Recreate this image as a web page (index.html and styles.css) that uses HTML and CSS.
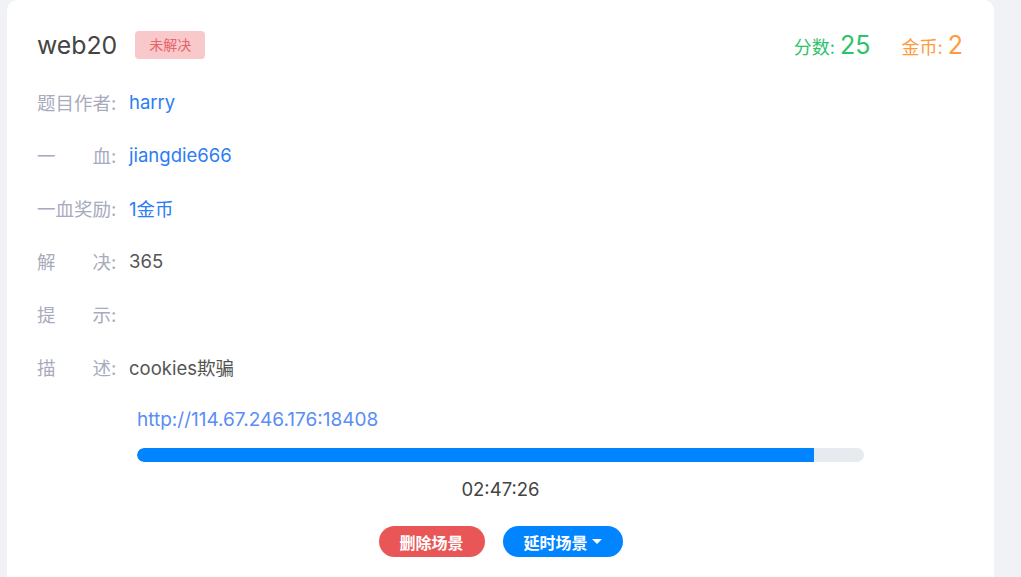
FILE: index.html
```html
<!DOCTYPE html>
<html lang="zh-CN">
<head>
<meta charset="utf-8">
<title>web20</title>
<link rel="stylesheet" href="styles.css">
</head>
<body>
<div class="page">
  <div class="card">
    <div class="header">
      <div class="title-wrap">
        <span class="title">web20</span>
        <span class="badge">未解决</span>
      </div>
      <div class="stats">
        <span class="score">分数: <b>25</b></span>
        <span class="coin">金币: <b>2</b></span>
      </div>
    </div>
    <div class="rows">
      <div class="row"><span class="label"><span class="lt">题目作者</span>:</span><span class="value link">harry</span></div>
      <div class="row"><span class="label"><span class="lt">一血</span>:</span><span class="value link">jiangdie666</span></div>
      <div class="row"><span class="label"><span class="lt">一血奖励</span>:</span><span class="value link">1金币</span></div>
      <div class="row"><span class="label"><span class="lt">解决</span>:</span><span class="value">365</span></div>
      <div class="row"><span class="label"><span class="lt">提示</span>:</span><span class="value"></span></div>
      <div class="row"><span class="label"><span class="lt">描述</span>:</span><span class="value">cookies欺骗</span></div>
    </div>
    <div class="scene">
      <a class="url">http://114.67.246.176:18408</a>
      <div class="progress"><div class="fill" style="width: 93.1%"></div></div>
      <div class="time">02:47:26</div>
      <div class="actions">
        <button class="btn btn-red">删除场景</button>
        <button class="btn btn-blue">延时场景<span class="caret"></span></button>
      </div>
    </div>
  </div>
</div>
</body>
</html>
```
FILE: styles.css
```css
* { box-sizing: border-box; }
html, body { margin: 0; padding: 0; }
body {
  background: #f1f2f5;
  font-family: Inter, "Noto Sans CJK SC", sans-serif;
  color: #4a4a4a;
  overflow: hidden;
}
.page {
  padding-left: 7px;
  width: 994px;
  height: 577px;
}
.card {
  background: #fff;
  border-radius: 10px 10px 0 0;
  height: 600px;
  padding: 27px 31px 0 30px;
}
.header {
  display: flex;
  justify-content: space-between;
  align-items: center;
  height: 36px;
}
.title-wrap { display: flex; align-items: center; gap: 18px; }
.title { font-size: 24.8px; color: #444; }
.badge {
  background: #f9c8cb;
  color: #e8636a;
  font-size: 14px;
  border-radius: 4px;
  padding: 0 14px;
  height: 28px;
  line-height: 28px;
}
.stats { display: flex; gap: 31px; align-items: baseline; font-size: 18px; }
.stats b { font-weight: 400; font-size: 25px; }
.score { color: #2dc26b; }
.coin { color: #ff9a3d; }
.rows { margin-top: 12px; }
.row {
  display: flex;
  align-items: center;
  height: 53px;
  font-size: 18.5px;
}
.label {
  width: 92px;
  flex-shrink: 0;
  color: #a8aabd;
  white-space: nowrap;
}
.lt {
  display: inline-block;
  width: 74px;
  text-align: justify;
  text-align-last: justify;
}
.value { color: #555; }
.value.link { color: #2b7cf5; }
.scene {
  margin-left: 100px;
  width: 727px;
  padding-top: 12px;
}
.url {
  display: block;
  color: #5a8df5;
  font-size: 19px;
  height: 30px;
  line-height: 30px;
}
.progress {
  margin-top: 13px;
  height: 14px;
  border-radius: 7px;
  background: #e7eaee;
  overflow: hidden;
}
.fill { height: 100%; background: #0084ff; border-radius: 7px 0 0 7px; }
.time {
  text-align: center;
  font-size: 18.5px;
  color: #444;
  margin-top: 14px;
  line-height: 26px;
}
.actions {
  display: flex;
  justify-content: center;
  gap: 18px;
  margin-top: 24px;
}
.btn {
  border: none;
  height: 31px;
  border-radius: 16px;
  color: #fff;
  font-family: inherit;
  font-weight: 700;
  font-size: 16px;
  padding: 0;
  display: flex;
  align-items: center;
  justify-content: center;
}
.btn-red { background: #e95657; width: 106px; }
.btn-blue { background: #0084ff; width: 120px; }
.caret {
  width: 0; height: 0;
  border-left: 5px solid transparent;
  border-right: 5px solid transparent;
  border-top: 5px solid #fff;
  margin-left: 4px;
}
```
